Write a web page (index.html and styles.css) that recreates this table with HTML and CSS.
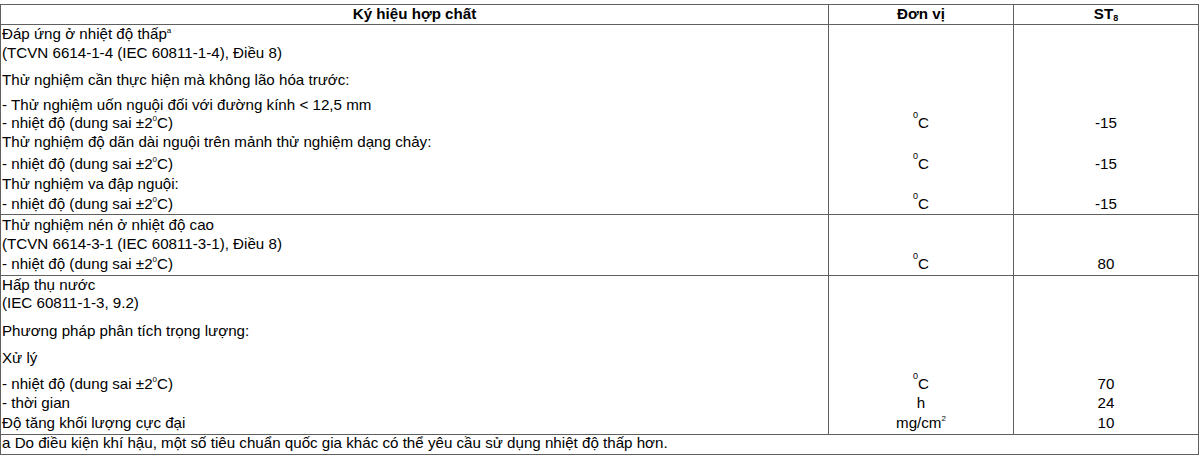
FILE: index.html
```html
<!DOCTYPE html>
<html lang="vi">
<head>
<meta charset="utf-8">
<title>Bảng yêu cầu thử nghiệm ST8</title>
<link rel="stylesheet" href="styles.css">
</head>
<body>
<table class="spec">
  <colgroup><col class="c-name"><col class="c-unit"><col class="c-val"></colgroup>
  <thead>
    <tr><th>Ký hiệu hợp chất</th><th>Đơn vị</th><th>ST<sub class="sub">8</sub></th></tr>
  </thead>
  <tbody>
    <tr class="pb1"><td>Đáp ứng ở nhiệt độ thấp<sup class="note">a</sup></td><td></td><td></td></tr>
    <tr class="pb9"><td>(TCVN 6614-1-4 (IEC 60811-1-4), Điều 8)</td><td></td><td></td></tr>
    <tr class="pb7"><td>Thử nghiệm cần thực hiện mà không lão hóa trước:</td><td></td><td></td></tr>
    <tr class="pb0"><td>- Thử nghiệm uốn nguội đối với đường kính &lt; 12,5 mm</td><td></td><td></td></tr>
    <tr class="pb1"><td>- nhiệt độ (dung sai ±2<sup class="deg">0</sup>C)</td><td><sup class="deg-u">0</sup>C</td><td>-15</td></tr>
    <tr class="pb4"><td>Thử nghiệm độ dãn dài nguội trên mảnh thử nghiệm dạng chảy:</td><td></td><td></td></tr>
    <tr class="pb2"><td>- nhiệt độ (dung sai ±2<sup class="deg">0</sup>C)</td><td><sup class="deg-u">0</sup>C</td><td>-15</td></tr>
    <tr class="pb2"><td>Thử nghiệm va đập nguội:</td><td></td><td></td></tr>
    <tr class="pb1 end"><td>- nhiệt độ (dung sai ±2<sup class="deg">0</sup>C)</td><td><sup class="deg-u">0</sup>C</td><td>-15</td></tr>

    <tr class="pt1 pb1"><td>Thử nghiệm nén ở nhiệt độ cao</td><td></td><td></td></tr>
    <tr class="pb2"><td>(TCVN 6614-3-1 (IEC 60811-3-1), Điều 8)</td><td></td><td></td></tr>
    <tr class="pb2 end"><td>- nhiệt độ (dung sai ±2<sup class="deg">0</sup>C)</td><td><sup class="deg-u">0</sup>C</td><td>80</td></tr>

    <tr class="pb0"><td>Hấp thụ nước</td><td></td><td></td></tr>
    <tr class="pb10"><td>(IEC 60811-1-3, 9.2)</td><td></td><td></td></tr>
    <tr class="pb9"><td>Phương pháp phân tích trọng lượng:</td><td></td><td></td></tr>
    <tr class="pb8"><td>Xử lý</td><td></td><td></td></tr>
    <tr class="pb1"><td>- nhiệt độ (dung sai ±2<sup class="deg">0</sup>C)</td><td><sup class="deg-u">0</sup>C</td><td>70</td></tr>
    <tr class="pb2"><td>- thời gian</td><td>h</td><td>24</td></tr>
    <tr class="pb2 end"><td>Độ tăng khối lượng cực đại</td><td>mg/cm<sup class="sq">2</sup></td><td>10</td></tr>

    <tr class="foot"><td colspan="3">a Do điều kiện khí hậu, một số tiêu chuẩn quốc gia khác có thể yêu cầu sử dụng nhiệt độ thấp hơn.</td></tr>
  </tbody>
</table>
</body>
</html>
```

FILE: styles.css
```css
html, body {
  margin: 0;
  padding: 0;
  background: #ffffff;
}

body {
  font-family: "Liberation Sans", Arial, sans-serif;
  font-size: 15.15px;
  color: #000000;
}

.spec {
  margin-top: 4px;
  width: 1199px;
  table-layout: fixed;
  border-collapse: separate;
  border-spacing: 0;
  border-top: 1px solid #606060;
  border-left: 1px solid #606060;
}

.c-name { width: 828px; }
.c-unit { width: 185px; }
.c-val  { width: 185px; }

.spec th,
.spec td {
  padding: 0;
  border-right: 1px solid #606060;
  vertical-align: top;
  white-space: nowrap;
}

.spec th {
  font-weight: bold;
  text-align: center;
  line-height: 17px;
  padding-bottom: 2px;
  border-bottom: 1px solid #606060;
}

.spec td {
  line-height: 18px;
  text-align: center;
}

.spec td:first-child {
  text-align: left;
  padding-left: 1px;
}

.pb0 td { padding-bottom: 0; }
.pb1 td { padding-bottom: 1px; }
.pb2 td { padding-bottom: 2px; }
.pb4 td { padding-bottom: 4px; }
.pb7 td { padding-bottom: 7px; }
.pb8 td { padding-bottom: 8px; }
.pb9 td { padding-bottom: 9px; }
.pb10 td { padding-bottom: 10px; }
.pt1 td { padding-top: 1px; }

.end td {
  border-bottom: 1px solid #606060;
}

.foot td {
  line-height: 16px;
  padding-bottom: 3px;
  border-bottom: 1px solid #606060;
}

.sub {
  font-size: 9px;
  line-height: 0;
  vertical-align: -2px;
}

.note {
  font-size: 8px;
  line-height: 0;
  vertical-align: 6px;
}

.deg {
  font-size: 8px;
  line-height: 0;
  vertical-align: 7px;
}

.deg-u {
  font-size: 9px;
  line-height: 0;
  vertical-align: 10px;
}

.sq {
  font-size: 8px;
  line-height: 0;
  vertical-align: 7px;
}
```
